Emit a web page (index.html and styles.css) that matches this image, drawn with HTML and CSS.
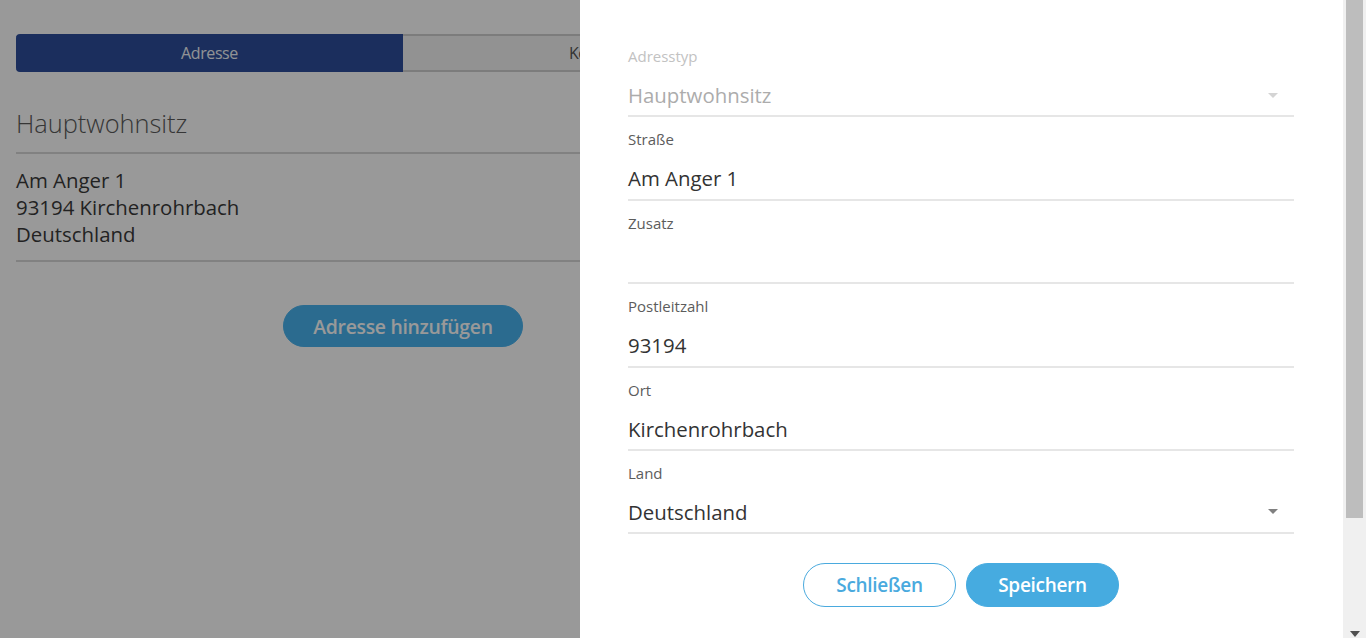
FILE: index.html
```html
<!DOCTYPE html>
<html lang="de">
<head>
<meta charset="utf-8">
<title>Adresse</title>
<link rel="stylesheet" href="styles.css">
</head>
<body>
<main class="page">
  <div class="tabs">
    <div class="tab tab-active">Adresse</div>
    <div class="tab">Kontakt</div>
  </div>
  <h2 class="addr-title">Hauptwohnsitz</h2>
  <div class="addr-body">
    <div>Am Anger 1</div>
    <div>93194 Kirchenrohrbach</div>
    <div>Deutschland</div>
  </div>
  <div class="add-row">
    <button class="btn-add">Adresse hinzufügen</button>
  </div>
</main>
<div class="overlay"></div>
<aside class="drawer">
  <form class="form">
    <div class="field field-disabled">
      <div class="label">Adresstyp</div>
      <div class="value"><span>Hauptwohnsitz</span><i class="caret"></i></div>
    </div>
    <div class="field">
      <div class="label">Straße</div>
      <div class="value"><span>Am Anger 1</span></div>
    </div>
    <div class="field">
      <div class="label">Zusatz</div>
      <div class="value"><span></span></div>
    </div>
    <div class="field">
      <div class="label">Postleitzahl</div>
      <div class="value"><span>93194</span></div>
    </div>
    <div class="field">
      <div class="label">Ort</div>
      <div class="value"><span>Kirchenrohrbach</span></div>
    </div>
    <div class="field">
      <div class="label">Land</div>
      <div class="value"><span>Deutschland</span><i class="caret"></i></div>
    </div>
    <div class="actions">
      <button type="button" class="btn btn-outline">Schließen</button>
      <button type="button" class="btn btn-fill">Speichern</button>
    </div>
  </form>
  <div class="scrollbar">
    <div class="thumb"></div>
    <div class="track"></div>
    <i class="arrow"></i>
  </div>
</aside>
</body>
</html>
```
FILE: styles.css
```css
* { box-sizing: border-box; }
html, body { margin: 0; padding: 0; height: 100%; }
body {
  font-family: "Open Sans", "Noto Sans", sans-serif;
  background: #ffffff;
  color: #333;
  overflow: hidden;
}
.page {
  padding: 34px 16px 0 16px;
  width: 806px;
}
.tabs {
  display: flex;
  height: 38px;
}
.tab {
  flex: 1;
  display: flex;
  align-items: center;
  justify-content: center;
  font-size: 16px;
  letter-spacing: -0.4px;
  color: #555;
  background: #f3f3f3;
  border-top: 2px solid #cfcfcf;
  border-bottom: 2px solid #cfcfcf;
}
.tab-active {
  background: #2d4e9c;
  color: #f2f4f8;
  border-color: #2d4e9c;
  border-radius: 4px 0 0 4px;
}
.addr-title {
  margin: 0;
  margin-top: 36px;
  font-size: 25.4px;
  font-weight: 300;
  color: #5a5a5a;
  line-height: 30px;
  padding-bottom: 14px;
  border-bottom: 2px solid #d8d8d8;
}
.addr-body {
  font-size: 20.4px;
  line-height: 27px;
  color: #3a3a3a;
  padding: 13px 0 12px;
  border-bottom: 2px solid #d8d8d8;
}
.add-row {
  display: flex;
  justify-content: center;
  padding-top: 43px;
}
.btn-add {
  font-family: inherit;
  width: 240px;
  height: 42px;
  border-radius: 21px;
  border: 1px solid #48b3ef;
  background: #48b3ef;
  color: #ffffff;
  font-size: 19.4px;
  font-weight: 600;
  letter-spacing: -0.3px;
}
.overlay {
  position: fixed;
  inset: 0;
  background: rgba(0, 0, 0, 0.4);
}
.drawer {
  position: fixed;
  top: 0;
  bottom: 0;
  left: 580px;
  right: 0;
  background: #ffffff;
  display: flex;
  overflow: hidden;
}
.form {
  flex: 1;
  padding: 34px 49px 0 48px;
}
.scrollbar {
  width: 23px;
  display: flex;
  flex-direction: column;
  background: #f0f0f0;
  padding: 0 3px 0 3px;
  position: relative;
}
.thumb {
  height: 518px;
  background: #bdbdbd;
}
.track { flex: 1; }
.arrow {
  position: absolute;
  bottom: 1px;
  left: 7px;
  width: 0;
  height: 0;
  border-left: 5px solid transparent;
  border-right: 5px solid transparent;
  border-top: 6px solid #505050;
}
.field {
  padding-top: 14px;
  border-bottom: 2px solid #e6e6e6;
  height: 83.4px;
}
.label {
  font-size: 15px;
  line-height: 16px;
  color: #5c5c5c;
}
.value {
  display: flex;
  justify-content: space-between;
  align-items: center;
  margin-top: 18px;
  height: 26px;
  font-size: 20.4px;
  color: #333;
}
.field-disabled .label { color: #c2c2c2; }
.field-disabled .value { color: #acacac; }
.caret {
  width: 0;
  height: 0;
  border-left: 5px solid transparent;
  border-right: 5px solid transparent;
  border-top: 5px solid #808080;
  margin-right: 16px;
}
.field-disabled .caret { border-top-color: #d4d4d4; }
.actions {
  display: flex;
  justify-content: center;
  gap: 10px;
  margin-top: 29px;
}
.btn {
  font-family: inherit;
  width: 153px;
  height: 44px;
  border-radius: 22px;
  font-size: 19px;
  font-weight: 600;
  letter-spacing: -0.3px;
}
.btn-outline {
  background: #ffffff;
  border: 1.5px solid #4aaade;
  color: #4aaade;
}
.btn-fill {
  background: #46abe0;
  border: 1.5px solid #46abe0;
  color: #ffffff;
}
```
